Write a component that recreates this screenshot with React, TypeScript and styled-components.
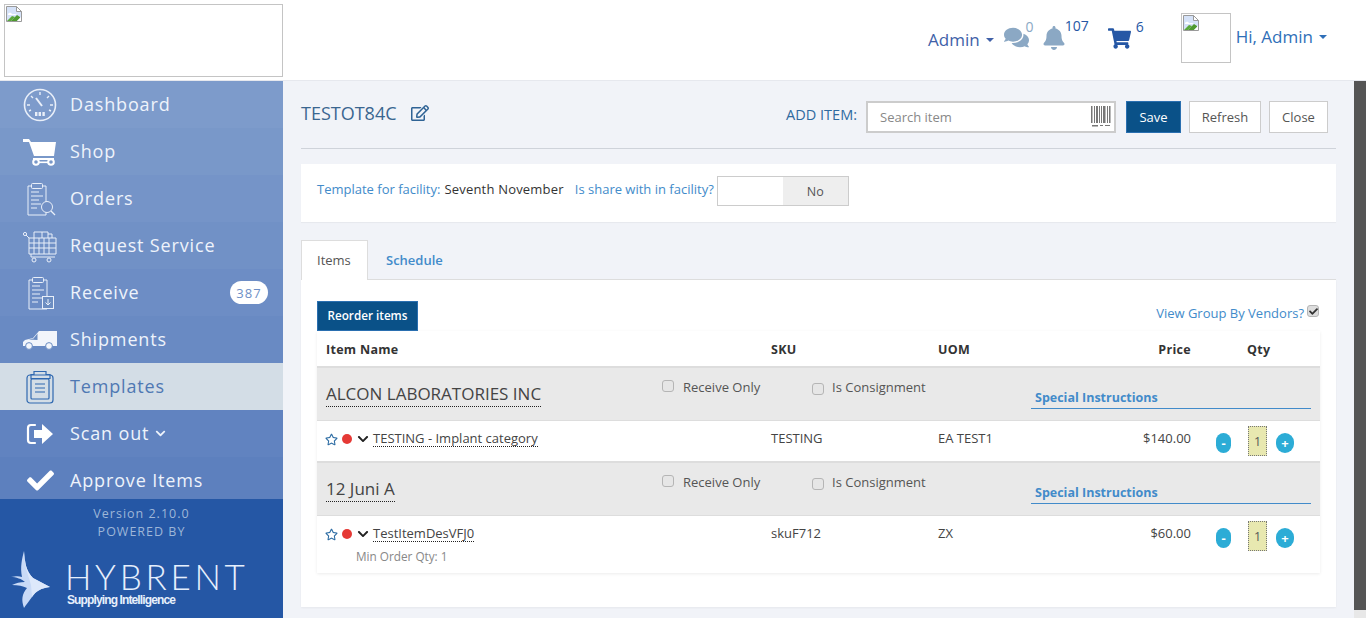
import React from "react";
import styled, { createGlobalStyle } from "styled-components";
import { FaComments, FaBell, FaShoppingCart, FaRegEdit, FaRegStar, FaChevronDown, FaCheck } from "react-icons/fa";

const Global = createGlobalStyle`
  html, body { margin: 0; height: 618px; overflow: hidden; background: #f1f3f8; }
  body { font-family: "Open Sans", "Liberation Sans", sans-serif; font-size: 13px; color: #333; }
  * { box-sizing: border-box; }
`;

const Page = styled.div`display: flex; flex-direction: column; width: 1366px; height: 618px;`;
const Header = styled.header`
  height: 81px; flex: none; background: #fff; border-bottom: 1px solid #e6e8ee;
  display: flex; align-items: flex-start; padding: 4px 0 0 4px;
`;
const LogoBox = styled.div`width: 279px; height: 73px; border: 1px solid #c4c4c4; padding: 1px;`;
const TopRight = styled.div`display: flex; align-items: flex-start; margin-left: 645px;`;
const TopMenu = styled.span<{ $top: number; $color: string }>`
  font-size: 17px; color: ${p => p.$color}; margin-top: ${p => p.$top}px; display: inline-flex; align-items: center; line-height: 24px;
`;
const Caret = styled.i`
  display: inline-block; width: 0; height: 0; margin-left: 6px;
  border-left: 4.5px solid transparent; border-right: 4.5px solid transparent; border-top: 4.5px solid currentColor;
`;
const TopIcon = styled.span<{ $left: number; $top: number; $color: string }>`
  display: inline-flex; margin-left: ${p => p.$left}px; margin-top: ${p => p.$top}px; color: ${p => p.$color};
`;
const Count = styled.sup<{ $color: string; $top: number; $left: number }>`
  font-size: 14px; line-height: 20px; vertical-align: baseline; color: ${p => p.$color}; margin-top: ${p => p.$top}px; margin-left: ${p => p.$left}px;
`;
const Avatar = styled.div`width: 50px; height: 50px; border: 1px solid #c4c4c4; margin: 9px 5px 0 37px; padding: 1px;`;

const Body = styled.div`flex: 1; display: flex; min-height: 0;`;
const Sidebar = styled.nav`width: 283px; flex: none; display: flex; flex-direction: column;`;
const NavList = styled.div`height: 418px; overflow: hidden; flex: none;`;
const NavRow = styled.div<{ $i: number; $active?: boolean }>`
  height: 47px; display: flex; align-items: center; position: relative;
  background: ${p => p.$active ? "#d3dde6" : `rgb(${125 - p.$i * 4}, ${155 - p.$i * 3.4}, ${203 - p.$i * 1.6})`};
  color: ${p => p.$active ? "#4f78b3" : "#eef3fb"};
  font-size: 18px; letter-spacing: .85px; padding-left: 22px;
`;
const NavIcon = styled.span`width: 36px; height: 40px; flex: none; margin-right: 12px; display: flex; align-items: center; justify-content: center;`;
const NavLabel = styled.span`display: inline-flex; align-items: center; margin-bottom: 2px;`;
const NavChevron = styled.span`display: inline-flex; margin-left: 6px; margin-top: 2px;`;
const Badge = styled.span`
  position: absolute; left: 230px; top: 12px; width: 38px; height: 23px; border-radius: 12px; background: #fff;
  color: #6d8fc6; font-size: 13px; letter-spacing: 1px; display: flex; align-items: center; justify-content: center;
`;
const SideFoot = styled.div`flex: 1; background: #2557a5; display: flex; flex-direction: column; align-items: center; padding-top: 6px;`;
const FootLine = styled.div`font-size: 12.5px; line-height: 18px; letter-spacing: 1px; color: #9db6d8;`;
const Brand = styled.div`align-self: flex-start; display: flex; margin: 10px 0 0 11px;`;
const BrandText = styled.div`margin-left: 14px; padding-top: 10px; color: #e6effd;`;
const BrandName = styled.div`font-family: "Lato", sans-serif; font-weight: 300; font-size: 35px; line-height: 30px; letter-spacing: 3.7px;`;
const BrandSub = styled.div`font-family: "Liberation Sans", sans-serif; font-weight: 700; font-size: 12px; line-height: 14px; letter-spacing: -0.88px; color: #e8f0fc; margin: 2px 0 0 2px;`;

const Main = styled.main`flex: 1; padding: 0 18px; min-width: 0; overflow: hidden;`;
const TitleBar = styled.div`
  height: 68px; border-bottom: 1px solid #cfd3da; display: flex; align-items: flex-start; padding: 20px 8px 0 0;
`;
const Title = styled.h1`font-size: 18px; font-weight: 400; color: #3a6690; margin: 0; line-height: 24px; flex: 1; display: flex; align-items: center;`;
const EditIcon = styled.span`display: inline-flex; margin-left: 14px; color: #2f6395;`;
const AddLabel = styled.span`font-size: 14.5px; color: #2f6a9f; line-height: 28px; margin-right: 9px;`;
const Search = styled.div`
  width: 250px; height: 32px; border: 2px solid #ccc; background: #fff; display: flex; align-items: center; padding: 0 3px 0 12px;
  color: #888; font-size: 13px; justify-content: space-between;
`;
const Btn = styled.button<{ $primary?: boolean; $w: number }>`
  width: ${p => p.$w}px; height: 32px; font: inherit; font-size: 13px; margin-left: ${p => p.$primary ? 10 : 8}px; padding: 0;
  background: ${p => p.$primary ? "#0a5188" : "#fff"}; color: ${p => p.$primary ? "#fff" : "#555"};
  border: 1px solid ${p => p.$primary ? "#2a6fb0" : "#ccc"};
`;
const Panel = styled.div`
  margin-top: 15px; height: 58px; background: #fff; display: flex; align-items: flex-start; padding: 12px 16px;
  box-shadow: 0 1px 1px rgba(0,0,0,.04);
`;
const BlueText = styled.span`color: #428bca; font-size: 13px; line-height: 26px;`;
const Strong = styled.span`color: #333; font-size: 13px; line-height: 26px; margin: 0 11px 0 4px; letter-spacing: .2px;`;
const Toggle = styled.div`width: 132px; height: 30px; border: 1px solid #ccc; margin-left: 3px; display: flex; background: #fff;`;
const ToggleOff = styled.div`margin-left: 65px; flex: 1; background: #eee; color: #555; display: flex; align-items: center; justify-content: center; font-size: 12.5px;`;
const Tabs = styled.div`margin-top: 18px; height: 39px; display: flex; position: relative; z-index: 1;`;
const Tab = styled.div<{ $active?: boolean }>`
  height: 40px; display: flex; align-items: center; font-size: 13px;
  ${p => p.$active
    ? "width: 67px; padding: 0 15px 2px; background: #fff; border: 1px solid #ddd; border-bottom: 0; color: #555;"
    : "padding: 0 15px; margin-left: 3px; color: #428bca; font-weight: 600;"}
`;
const TabBody = styled.div`
  height: 328px; background: #fff; border-top: 1px solid #ddd; padding: 21px 16px 0; box-shadow: 0 1px 2px rgba(0,0,0,.05);
`;
const TableTop = styled.div`display: flex; justify-content: space-between; align-items: flex-start; height: 30px;`;
const Reorder = styled.button`
  width: 101px; height: 30px; padding: 0 0 2px; background: #0a5188; border: 1px solid #2a6fb0; color: #fff; font: inherit; font-size: 11.7px; font-weight: 600;
`;
const ViewGroup = styled.div`display: flex; align-items: flex-start; margin: -1px 1px 0 0;`;
const Table = styled.div`box-shadow: 0 1px 3px rgba(0,0,0,.08);`;
const cols = "445px 167px 163px 90px 1fr";
const HeadRow = styled.div`
  height: 37px; display: grid; grid-template-columns: ${cols}; padding: 2px 0 0 9px; align-items: center;
  border-bottom: 2px solid #ddd; font-weight: 700; font-size: 12.5px; color: #333; letter-spacing: .3px;
`;
const PriceHead = styled.div`text-align: right;`;
const QtyHead = styled.div`padding-left: 56px;`;
const GroupRow = styled.div`
  height: 53px; background: #e9e9e9; border-bottom: 1px solid #ddd; display: grid; grid-template-columns: 336px 150px 219px 280px;
  padding-left: 9px; color: #555;
`;
const Vendor = styled.div`padding-top: 14px;`;
const VendorName = styled.span`font-size: 17px; line-height: 24px; color: #444; display: inline-block; border-bottom: 1px dotted #222; height: 25px;`;
const CheckCell = styled.label`display: flex; align-items: flex-start; padding-top: 10px; font-size: 13px; line-height: 18px;`;
const Box = styled.span<{ $gap: number; $on?: boolean; $top: number; $left?: number }>`
  width: 12px; height: 12px; border: 1px solid #b5b5b5; border-radius: 3px; background: ${p => p.$on ? "#ddd" : "#e6e6e6"};
  margin: ${p => p.$top}px ${p => p.$gap}px 0 ${p => p.$left ?? 0}px;
  display: inline-flex; align-items: center; justify-content: center; color: #333; flex: none;
`;
const Instr = styled.div`
  align-self: start; margin-top: 20px; height: 21px; border-bottom: 1px solid #428bca; padding-left: 4px;
  color: #428bca; font-size: 12.5px; font-weight: 700; line-height: 19px;
`;
const ItemRow = styled.div<{ $tall?: boolean; $last?: boolean }>`
  height: ${p => p.$tall ? 57 : 42}px; display: grid; grid-template-columns: ${cols}; padding-left: 9px; background: #fff; align-items: start;
  border-bottom: ${p => p.$last ? "0" : "2px solid #ddd"};
`;
const Cell = styled.div`padding-top: 7px; line-height: 20px; color: #444; font-size: 13px;`;
const Price = styled(Cell)`text-align: right;`;
const NameLine = styled.div`display: flex; align-items: center; height: 20px; margin: 1px 0 0 -1px;`;
const Star = styled.span`display: inline-flex; color: #2e6da4; margin-right: 4px;`;
const Dot = styled.span`width: 10px; height: 10px; border-radius: 50%; background: #e53935; margin-right: 5px;`;
const Chev = styled.span`display: inline-flex; color: #222; margin-right: 4px;`;
const ItemLink = styled.span`border-bottom: 1px dotted #222; line-height: 15px; color: #444; font-size: 13px;`;
const MinQty = styled.div`margin: 3px 0 0 30px; font-size: 11.75px; color: #888; line-height: 18px;`;
const QtyCell = styled.div`display: flex; align-items: flex-start; padding: 5px 0 0 25px;`;
const Round = styled.span<{ $w: number; $left: number }>`
  width: ${p => p.$w}px; height: 20px; border-radius: 9px; background: #2cacd6; color: #fff; font-size: 13px; font-weight: 700;
  display: flex; align-items: center; justify-content: center; margin: 7px 0 0 ${p => p.$left}px;
`;
const QtyBox = styled.span`
  width: 19px; height: 30px; background: #e8e8b0; border: 1px dotted #777; margin-left: 17px; color: #555; font-size: 12.5px;
  display: flex; align-items: center; justify-content: center;
`;
const ScrollBar = styled.div`width: 12px; flex: none; display: flex; flex-direction: column;`;
const Track = styled.div`flex: 1; background: #555;`;
const ScrollEnd = styled.div`height: 8px; background: #e8e8e8;`;

const Broken = () => (
  <svg width="16" height="16" viewBox="0 0 16 16">
    <path d="M.5.5h10l5 5v10H.5z" fill="#d5e2f8" stroke="#9a9a9a" />
    <path d="M10.5.5v5h5z" fill="#fff" stroke="#9a9a9a" />
    <path d="M2 8c2-2 3-1 4 0s3-1 5 1H2z" fill="#fff" />
    <path d="M1 15l5-5 3 1-4 4z" fill="#5aa83a" />
    <path d="M5 15l6-6 3 2v1l-3 3z" fill="#4e9a2e" />
    <path d="M11 15l4-4v4z" fill="#fff" />
  </svg>
);
const Barcode = () => (
  <svg width="20" height="24" viewBox="0 0 20 24" fill="#777">
    <rect x="0" y="1" width="1.5" height="17" /><rect x="3" y="1" width="1" height="17" /><rect x="5" y="1" width="2" height="17" />
    <rect x="8" y="1" width="1" height="17" /><rect x="10" y="1" width="1" height="17" /><rect x="12" y="1" width="2.5" height="17" />
    <rect x="16" y="1" width="1" height="17" /><rect x="18" y="1" width="1.5" height="17" />
    <rect x="1" y="20" width="6" height="1.5" /><rect x="9" y="20" width="3" height="1" /><rect x="14" y="20" width="5" height="1" />
  </svg>
);
const Stroke = { fill: "none", stroke: "#e9eff9", strokeWidth: 1 };
const Clipboard = ({ color = "#e9eff9" }: { color?: string }) => (
  <>
    <path d="M7 5h-3v29h18V5h-3" fill="none" stroke={color} />
    <rect x="7.5" y="2.5" width="11" height="5" rx="1" fill="none" stroke={color} />
    <path d="M7 11h8M7 15h12M7 19h8M7 23h10M7 27h6" stroke={color} strokeWidth="1.2" />
  </>
);
const icons: Record<string, React.ReactNode> = {
  dashboard: (
    <svg width="34" height="34" viewBox="0 0 34 34">
      <circle cx="17" cy="17" r="15.5" {...Stroke} strokeWidth="1.6" />
      <path d="M17 4v3M8 8l2 2M26 8l-2 2M4 17h3M27 17h3M6 23l2-1M28 23l-2-1" {...Stroke} strokeWidth="1.4" />
      <path d="M13 10l6 8" stroke="#e9eff9" strokeWidth="2" />
      <path d="M12 24h2.4v4H12zM15.6 24H18v4h-2.4zM19.4 24h2.4v4h-2.4z" fill="#e9eff9" />
    </svg>
  ),
  shop: (
    <svg width="34" height="28" viewBox="0 0 34 28" fill="#fff">
      <path d="M0 1h6l2 3h25l-2 14H11L6 4H0z" />
      <path d="M10 20h21v2H10z" />
      <circle cx="13" cy="24" r="2.8" fill="none" stroke="#fff" strokeWidth="2" />
      <circle cx="28" cy="24" r="2.8" fill="none" stroke="#fff" strokeWidth="2" />
      <path d="M15 23.5h10v1.6H15z" />
    </svg>
  ),
  orders: (
    <svg width="32" height="35" viewBox="0 0 32 35">
      <Clipboard />
      <circle cx="23" cy="26" r="5.5" fill="#7290c5" stroke="#e9eff9" />
      <path d="M27 30l4 4" stroke="#e9eff9" strokeWidth="1.3" />
    </svg>
  ),
  request: (
    <svg width="34" height="34" viewBox="0 0 34 34" fill="none" stroke="#e9eff9">
      <circle cx="2" cy="5" r="1.6" />
      <path d="M3 6l3 3v16h27V9H6M6 14h27M6 19h27M11 9v16M16 9v16M21 9v16M26 9v16M8 25v3h24" />
      <path d="M11 9V3h8v6M19 3h6v6M25 5h4v4" />
      <circle cx="11" cy="31" r="2" /><circle cx="26" cy="31" r="2" />
    </svg>
  ),
  receive: (
    <svg width="30" height="35" viewBox="0 0 30 35">
      <Clipboard />
      <rect x="17.5" y="21.5" width="11" height="12" fill="#6d8ec2" stroke="#e9eff9" />
      <path d="M23 24v6M20.5 27.5L23 30l2.5-2.5" fill="none" stroke="#e9eff9" />
    </svg>
  ),
  shipments: (
    <svg width="34" height="20" viewBox="0 0 34 20">
      <path d="M0 16v-4l2-2 8-2 6-7h18v15H0z" fill="#f2f5fb" />
      <path d="M5.500 9.500l5-1 4-5v6.500z" fill="#6a8cc2" />
      <circle cx="6" cy="16" r="3.400" fill="#f2f5fb" stroke="#6a8cc2" />
      <circle cx="26" cy="16" r="3.400" fill="#f2f5fb" stroke="#6a8cc2" />
    </svg>
  ),
  templates: (
    <svg width="28" height="34" viewBox="0 0 28 34" fill="none" stroke="#2f68b0" strokeWidth="1.2">
      <rect x="1" y="5" width="26" height="28" rx="3" />
      <rect x="5" y="9" width="18" height="20" rx="1" />
      <path d="M8 1.500h12v3h4v4H5v-4h3z" />
      <path d="M9 14h10M9 18h10M9 22h10" />
    </svg>
  ),
  scan: (
    <svg width="28" height="22" viewBox="0 0 28 22">
      <path d="M9 2H5a3 3 0 0 0-3 3v12a3 3 0 0 0 3 3h4" fill="none" stroke="#fff" strokeWidth="2.2" strokeLinecap="round" />
      <path d="M8 7h8V1l11 10-11 10v-6H8z" fill="#fff" />
    </svg>
  ),
  approve: <FaCheck size={27} color="#fff" />,
};
const Bird = () => (
  <svg width="40" height="58" viewBox="0 0 40 58">
    <path d="M13 0c1 12 2 20 9 27l17 9c-9 1-14 4-18 10-3 4-6 8-8 11-3-8-2-14 3-20-4-2-9-3-15-3 4-2 8-3 13-3-3-3-9-5-14-5 5-1 8-1 11 0C9 16 11 8 13 0z" fill="#c9daf7" />
    <path d="M13 0c1 12 2 20 9 27l17 9c-9 1-14 4-18 10l-1-12c-3-12-7-18-7-34z" fill="#dde8fb" />
  </svg>
);

const nav = [
  ["dashboard", "Dashboard"], ["shop", "Shop"], ["orders", "Orders"], ["request", "Request Service"], ["receive", "Receive"],
  ["shipments", "Shipments"], ["templates", "Templates"], ["scan", "Scan out"], ["approve", "Approve Items"],
];

const Group = ({ name }: { name: string }) => (
  <GroupRow>
    <Vendor><VendorName>{name}</VendorName></Vendor>
    <CheckCell><Box $gap={9} $top={2} />Receive Only</CheckCell>
    <CheckCell><Box $gap={8} $top={5} />Is Consignment</CheckCell>
    <Instr>Special Instructions</Instr>
  </GroupRow>
);
const Item = ({ name, sku, uom, price, min }: { name: string; sku: string; uom: string; price: string; min?: string }) => (
  <ItemRow $tall={!!min} $last={!!min}>
    <Cell>
      <NameLine>
        <Star><FaRegStar size={13} /></Star><Dot /><Chev><FaChevronDown size={12} /></Chev>
        <ItemLink>{name}</ItemLink>
      </NameLine>
      {min && <MinQty>{min}</MinQty>}
    </Cell>
    <Cell>{sku}</Cell>
    <Cell>{uom}</Cell>
    <Price>{price}</Price>
    <QtyCell>
      <Round $w={15} $left={0}>-</Round>
      <QtyBox>1</QtyBox>
      <Round $w={18} $left={9}>+</Round>
    </QtyCell>
  </ItemRow>
);

export default function App() {
  return (
    <Page>
      <Global />
      <Header>
        <LogoBox><Broken /></LogoBox>
        <TopRight>
          <TopMenu $top={24} $color="#4061a8">Admin<Caret /></TopMenu>
          <TopIcon $left={10} $top={21} $color="#8ba8c4"><FaComments size={25} /></TopIcon>
          <Count $color="#8ba8c4" $top={13} $left={-3}>0</Count>
          <TopIcon $left={8} $top={22} $color="#8ba8c4"><FaBell size={24} /></TopIcon>
          <Count $color="#2557a5" $top={12} $left={-1}>107</Count>
          <TopIcon $left={19} $top={23} $color="#2557a5"><FaShoppingCart size={23} /></TopIcon>
          <Count $color="#2557a5" $top={13} $left={5}>6</Count>
          <Avatar><Broken /></Avatar>
          <TopMenu $top={21} $color="#2f6fb8">Hi, Admin<Caret /></TopMenu>
        </TopRight>
      </Header>
      <Body>
        <Sidebar>
          <NavList>
            {nav.map(([k, label], i) => (
              <NavRow key={k} $i={i} $active={k === "templates"}>
                <NavIcon>{icons[k]}</NavIcon>
                <NavLabel>
                  {label}
                  {k === "scan" && <NavChevron><FaChevronDown size={11} /></NavChevron>}
                </NavLabel>
                {k === "receive" && <Badge>387</Badge>}
              </NavRow>
            ))}
          </NavList>
          <SideFoot>
            <FootLine>Version 2.10.0</FootLine>
            <FootLine>POWERED BY</FootLine>
            <Brand>
              <Bird />
              <BrandText>
                <BrandName>HYBRENT</BrandName>
                <BrandSub>Supplying Intelligence</BrandSub>
              </BrandText>
            </Brand>
          </SideFoot>
        </Sidebar>
        <Main>
          <TitleBar>
            <Title>TESTOT84C<EditIcon><FaRegEdit size={18} /></EditIcon></Title>
            <AddLabel>ADD ITEM:</AddLabel>
            <Search>Search item<Barcode /></Search>
            <Btn $primary $w={55}>Save</Btn>
            <Btn $w={72}>Refresh</Btn>
            <Btn $w={59}>Close</Btn>
          </TitleBar>
          <Panel>
            <BlueText>Template for facility:</BlueText>
            <Strong>Seventh November</Strong>
            <BlueText>Is share with in facility?</BlueText>
            <Toggle><ToggleOff>No</ToggleOff></Toggle>
          </Panel>
          <Tabs>
            <Tab $active>Items</Tab>
            <Tab>Schedule</Tab>
          </Tabs>
          <TabBody>
            <TableTop>
              <Reorder>Reorder items</Reorder>
              <ViewGroup>
                <BlueText>View Group By Vendors?</BlueText>
                <Box $gap={0} $on $top={5} $left={3}><FaCheck size={9} /></Box>
              </ViewGroup>
            </TableTop>
            <Table>
              <HeadRow>
                <div>Item Name</div><div>SKU</div><div>UOM</div><PriceHead>Price</PriceHead><QtyHead>Qty</QtyHead>
              </HeadRow>
              <Group name="ALCON LABORATORIES INC" />
              <Item name="TESTING - Implant category" sku="TESTING" uom="EA TEST1" price="$140.00" />
              <Group name="12 Juni A" />
              <Item name="TestItemDesVFJ0" sku="skuF712" uom="ZX" price="$60.00" min="Min Order Qty: 1" />
            </Table>
          </TabBody>
        </Main>
        <ScrollBar><Track /><ScrollEnd /></ScrollBar>
      </Body>
    </Page>
  );
}
